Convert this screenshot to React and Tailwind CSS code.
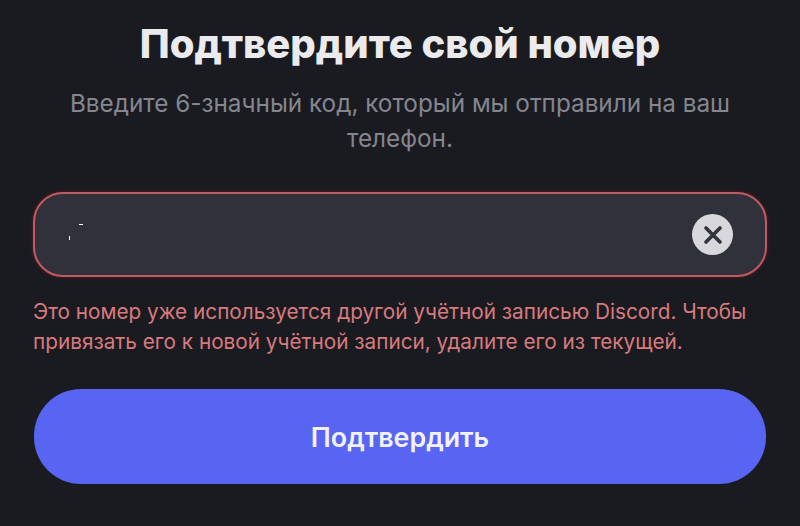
export default function App() {
  return (
    <div className="w-[800px] h-[526px] overflow-hidden bg-[#1a1b21] flex flex-col items-center font-['Inter','Noto_Sans',sans-serif]">
      <h1 className="mt-[18px] text-[40px] leading-[52px] font-extrabold text-[#ebebed]">Подтвердите свой номер</h1>
      <p className="mt-[16px] w-[700px] text-center text-[24.3px] leading-[35px] text-[#85868f]">Введите 6-значный код, который мы отправили на ваш телефон.</p>
      <div className="mt-[36px] w-[734px] h-[85px] rounded-[30px] border-2 border-[#bd5c62] shadow-[0_0_3px_1px_#4a1a1e] bg-[#30313b] flex items-center justify-end pr-[32px] relative">
        <span className="absolute left-[44px] top-[30px] w-[4px] h-[1px] bg-white"></span>
        <span className="absolute left-[34px] top-[42px] w-[1px] h-[4px] bg-white"></span>
        <div className="w-[41px] h-[41px] rounded-full bg-[#d8d8dc] flex items-center justify-center">
          <svg width="22" height="22" viewBox="0 0 22 22" fill="none" stroke="#33343c" strokeWidth="3.7" strokeLinecap="round"><path d="M4 4l14 14M18 4L4 18" /></svg>
        </div>
      </div>
      <p className="mt-[20px] w-[734px] text-[20.75px] leading-[30px] text-[#d97a7d]">Это номер уже используется другой учётной записью Discord. Чтобы привязать его к новой учётной записи, удалите его из текущей.</p>
      <button className="mt-[32px] w-[732px] h-[95px] rounded-[47px] bg-[#5865f2] text-[#f2f2f5] text-[26.8px] font-semibold pt-[2px]">Подтвердить</button>
    </div>
  );
}
